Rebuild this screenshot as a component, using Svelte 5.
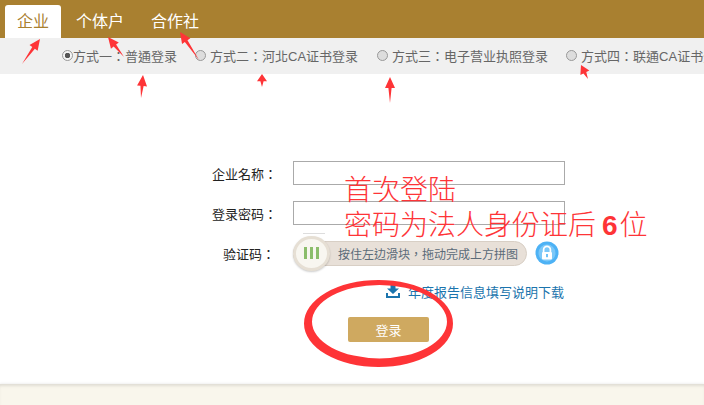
<script>
	const tabs = ['企业', '个体户', '合作社'];
	const methods = [
		{ label: '方式一：普通登录', checked: true },
		{ label: '方式二：河北CA证书登录', checked: false },
		{ label: '方式三：电子营业执照登录', checked: false },
		{ label: '方式四：联通CA证书登录', checked: false }
	];
	// hand drawn arrows, tip first: [tipX, tipY, tailX, tailY]
	const arrows = [
		[40, 39, 22, 64],
		[108, 37, 124, 57],
		[180, 32, 199, 60],
		[143, 75, 141, 98],
		[262, 74, 262, 87],
		[390, 77, 390, 103],
		[581, 65, 588, 79]
	];

	function arrowPoints([x1, y1, x2, y2]) {
		const len = Math.hypot(x2 - x1, y2 - y1);
		const ux = (x2 - x1) / len;
		const uy = (y2 - y1) / len;
		const nx = -uy;
		const ny = ux;
		const head = Math.min(11, len * 0.55);
		const hx = x1 + ux * head;
		const hy = y1 + uy * head;
		const pts = [
			[x1, y1],
			[hx + nx * 5, hy + ny * 5],
			[hx + nx * 1.6, hy + ny * 1.6],
			[x2, y2],
			[hx - nx * 1.6, hy - ny * 1.6],
			[hx - nx * 5, hy - ny * 5]
		];
		return pts.map((p) => p.join(',')).join(' ');
	}
</script>

<div class="page">
	<nav class="tabs">
		{#each tabs as tab, i}
			<span class="tab" class:active={i === 0}>{tab}</span>
		{/each}
	</nav>

	<div class="methods">
		{#each methods as m}
			<label class="method">
				<span class="radio" class:checked={m.checked}></span>
				<span class="method-text">{m.label}</span>
			</label>
		{/each}
	</div>

	<main class="form">
		<div class="row">
			<span class="label">企业名称：</span>
			<span class="input"></span>
		</div>
		<div class="row">
			<span class="label">登录密码：</span>
			<span class="input"></span>
		</div>
		<div class="row slider-row">
			<span class="label">验证码：</span>
			<div class="slider">
				<span class="knob"><i></i><i></i><i></i></span>
				<span class="slider-text">按住左边滑块，拖动完成上方拼图</span>
			</div>
			<svg class="lock" width="24" height="24" viewBox="0 0 24 24">
				<circle cx="12" cy="12" r="11.5" fill="#4db2f5" />
				<circle cx="12" cy="12" r="8.5" fill="#7cc8f8" />
				<path d="M8.6 11V8.8a3.4 3.4 0 0 1 6.8 0V11" fill="none" stroke="#fff" stroke-width="1.7" />
				<rect x="7" y="11" width="10" height="7.5" rx="1" fill="#fff" />
				<rect x="11.2" y="13" width="1.6" height="3.2" fill="#4db2f5" />
			</svg>
		</div>
		<a class="download" href="#top">
			<svg width="14" height="13" viewBox="0 0 14 13">
				<path d="M0 8h2v3h10V8h2v5H0z" fill="#1b74ad" />
				<path d="M4.500 0h5v3.500H13L7 9 1 3.500h3.500z" fill="#1b74ad" />
			</svg>
			<span>年度报告信息填写说明下载</span>
		</a>
		<button class="submit" type="button">登录</button>
	</main>

	<footer class="foot"></footer>

	<!-- annotations drawn on top of the screenshot -->
	<div class="note">
		<p>首次登陆</p>
		<p>密码为法人身份证后<b>6</b>位</p>
	</div>
	<svg class="marks" width="704" height="405" viewBox="0 0 704 405">
		{#each arrows as a}
			<polygon points={arrowPoints(a)} fill="#fe3437" />
		{/each}
		<rect x="303" y="233" width="22" height="1" fill="#ddd" />
		<path
			fill="#fe3437"
			fill-rule="evenodd"
			d="M304 323.500a74.500 43.500 0 1 0 149 0a74.500 43.500 0 1 0 -149 0zM312 321.700a67.500 36.700 0 1 1 135 0a67.500 36.700 0 1 1 -135 0z"
		/>
	</svg>
</div>

<style>
	:global(body) {
		margin: 0;
		background: #fff;
	}
	.page {
		position: relative;
		width: 704px;
		height: 405px;
		overflow: hidden;
		display: flex;
		flex-direction: column;
		font-family: 'Liberation Sans', 'Noto Sans CJK TC', sans-serif;
		color: #666;
	}
	.tabs {
		height: 38px;
		flex: none;
		box-sizing: border-box;
		padding: 5px 0 0 5px;
		display: flex;
		background: #a98030;
	}
	.tab {
		width: 56px;
		height: 33px;
		margin-right: 19px;
		font-size: 16px;
		line-height: 33px;
		text-align: center;
		color: #fff;
	}
	.tab.active {
		color: #a98030;
		background: #fff;
		border-radius: 3px 3px 0 0;
		margin-right: 11px;
	}
	.methods {
		height: 36px;
		flex: none;
		box-sizing: border-box;
		padding: 0 0 2px 62px;
		display: flex;
		align-items: center;
		gap: 18px;
		background: #f0f0f0;
		white-space: nowrap;
		overflow: hidden;
	}
	.method {
		display: flex;
		align-items: center;
		gap: 4px;
		font-size: 13px;
		color: #666;
	}
	.method:first-child {
		gap: 0;
	}
	.method:nth-child(2) {
		margin-right: 1px;
	}
	.radio {
		width: 9px;
		height: 9px;
		flex: none;
		border-radius: 50%;
		border: 1px solid #999;
		background: #ddd;
	}
	.radio.checked {
		background: radial-gradient(circle, #555 0 2.500px, #f4f4f4 3px);
	}
	.form {
		flex: 1;
		box-sizing: border-box;
		padding: 87px 0 0 212px;
		display: flex;
		flex-direction: column;
	}
	.row {
		display: flex;
		align-items: center;
		height: 24px;
		margin-bottom: 16px;
	}
	.label {
		width: 81px;
		flex: none;
		text-align: right;
		box-sizing: border-box;
		padding-right: 18px;
		font-size: 13px;
		color: #222;
		white-space: nowrap;
	}
	.input {
		width: 270px;
		height: 22px;
		border: 1px solid #aaa;
		background: #fff;
	}
	.slider-row {
		height: 26px;
		margin-top: -1px;
		margin-bottom: 0;
	}
	.slider {
		width: 234px;
		height: 25px;
		box-sizing: border-box;
		border: 1px solid #d8cfc5;
		border-radius: 13px;
		background: #e8e0d8;
		display: flex;
		align-items: center;
	}
	.knob {
		width: 37px;
		height: 35px;
		flex: none;
		margin: 0 8px 0 -1px;
		border-radius: 50%;
		background: #f8f6f0;
		border: 3px solid #e6dfd4;
		box-sizing: border-box;
		box-shadow: 0 1px 2px rgba(0, 0, 0, 0.2);
		display: flex;
		align-items: center;
		justify-content: center;
		gap: 3px;
	}
	.knob i {
		width: 3px;
		height: 12px;
		background: #8bbd6b;
	}
	.slider-text {
		font-size: 12px;
		color: #5b6b78;
		white-space: nowrap;
	}
	.lock {
		margin-left: 8px;
	}
	.download {
		display: flex;
		align-items: center;
		gap: 8px;
		margin: 15px 0 0 174px;
		height: 20px;
		font-size: 13px;
		color: #1b74ad;
		text-decoration: none;
		white-space: nowrap;
	}
	.submit {
		width: 81px;
		height: 25px;
		margin: 16px 0 0 136px;
		padding: 0;
		border: 0;
		border-radius: 2px;
		background: #cfa960;
		color: #fff;
		font: inherit;
		font-size: 13px;
	}
	.foot {
		height: 21px;
		flex: none;
		background: #f9f6ec;
		box-shadow:
			inset 0 3px 3px -1px rgba(0, 0, 0, 0.1),
			0 -1px 2px rgba(0, 0, 0, 0.06);
	}
	.note {
		position: absolute;
		left: 344px;
		top: 173px;
		color: #fe3437;
		font-size: 28px;
		font-weight: 300;
		line-height: 35px;
		white-space: nowrap;
	}
	.note p {
		margin: 0;
	}
	.note b {
		font-family: 'Liberation Sans', sans-serif;
		font-weight: 700;
		margin: 0 2px 0 6px;
	}
	.marks {
		position: absolute;
		left: 0;
		top: 0;
		pointer-events: none;
	}
</style>
